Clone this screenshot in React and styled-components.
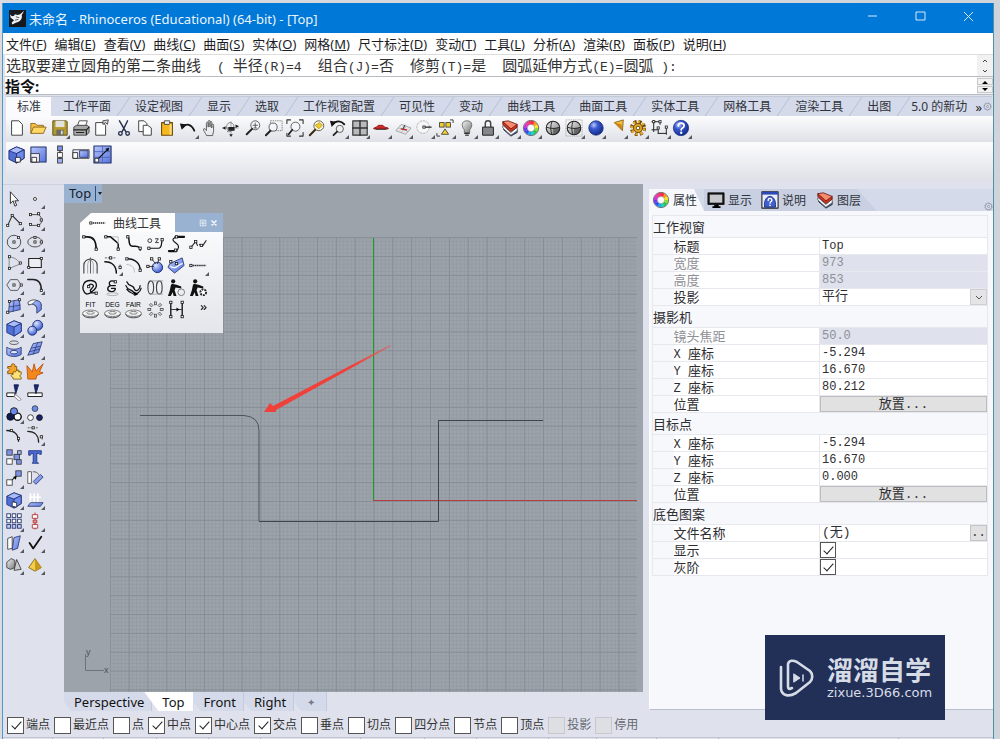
import React from "react";
import styled, { createGlobalStyle, css } from "styled-components";

const SANS = `"Noto Sans", "Noto Sans CJK SC", sans-serif`;
const MONO = `"Liberation Mono", "Noto Sans CJK SC", monospace`;
const TAB = "#d5daea";
const FRAME = "#dfe2ec";

const Global = createGlobalStyle`
  *, *::before, *::after { box-sizing: border-box; }
  body { margin: 0; font-family: ${SANS}; font-size: 13px; color: #1d1d1f; background: #d3d6db; }
  button, input, select { font: inherit; color: inherit; margin: 0; }
`;

/* ---------- icon drawings, all on a 20 x 20 grid ---------- */

const HUES = ["#ff2d2d", "#ff9a1f", "#ffe81f", "#8fe02a", "#22cc4a", "#1fd2c0", "#22a4f2", "#2b50ee", "#7a35ee", "#cc35e6", "#f236b0", "#f53370"];
const arcLen = (2 * Math.PI * 6) / 12;
const wheel = (
  <g fill="none" strokeWidth="4">
    {HUES.map((c, i) => (
      <circle key={c} cx="10" cy="10" r="6" stroke={c} strokeDasharray={`${arcLen + 0.3} 60`} transform={`rotate(${i * 30 - 90} 10 10)`} />
    ))}
    <circle cx="10" cy="10" r="8.500" stroke="#444" strokeWidth=".8" />
    <circle cx="10" cy="10" r="4" stroke="#666" strokeWidth=".5" fill="#fff" />
  </g>
);
const node = (x, y, k) => <rect key={k || `${x}-${y}`} x={x - 1.2} y={y - 1.2} width="2.4" height="2.4" fill="#fff" stroke="#222" strokeWidth=".9" />;
const sq = (x, y, s, f = "#fff") => <rect key={`${x}-${y}`} x={x} y={y} width={s} height={s} fill={f} stroke="#333" strokeWidth=".9" />;
const ln = (d, c = "#222", w = 1.2) => <path d={d} fill="none" stroke={c} strokeWidth={w} strokeLinecap="round" strokeLinejoin="round" />;
const fl = (d, f, c = "#333", w = 0.9) => <path d={d} fill={f} stroke={c} strokeWidth={w} strokeLinejoin="round" />;
const ripple = (
  <g fill="none" stroke="#777">
    <ellipse cx="10" cy="14" rx="8.400" ry="3.400" fill="#f4f4f6" />
    <ellipse cx="10" cy="13.500" rx="4" ry="1.400" />
    <path d="M1.600 15c2 5 14.800 5 16.800 0" stroke="#444" />
  </g>
);
const cap = (t) => <text x="10" y="7" textAnchor="middle" fontSize="7" fontFamily="Liberation Sans, sans-serif" fill="#000">{t}</text>;
const cube = (
  <g>
    {fl("M2 6l8-4 8 3v9l-8 5-8-4z", "#4f6fd6", "#1d2c74")}
    {fl("M2 6l8-4 8 3-8 4z", "#aabcf8", "#1d2c74")}
    {fl("M10 9l8-4v9l-8 5z", "#6d8bea", "#1d2c74")}
  </g>
);
const digger = (
  <g>
    <circle cx="6.500" cy="3.500" r="2.200" fill="#111" />
    <path d="M5 6l5 1 5 2v2l-6-1-1 3 2 6H7l-1-4-2 4H1l2-6 1-5z" fill="#111" />
  </g>
);
const shaded = (
  <g>
    <circle cx="10" cy="10" r="7.500" fill="url(#grey)" />
    <path d="M10 10h7.500a7.500 7.500 0 0 1-7.500 7.500z" fill="#333" opacity=".5" />
    <ellipse cx="10" cy="10" rx="7.500" ry="7.500" fill="none" stroke="#222" strokeWidth="1.200" />
    <path d="M9 2.500c-2 5-2 10 0 15M2.500 9c5 2 10 2 15 0" fill="none" stroke="#222" />
  </g>
);

const ICONS = {
  file: fl("M4 2h8l4 4v12H4z", "#fff", "#444", 1.1),
  open: <g>{fl("M2 16V5h5l2 2h7v3", "#f6c044", "#805a10")}{fl("M2 16l3-7h14l-3 7z", "#ffd766", "#805a10")}</g>,
  save: <g>{fl("M2 2h15l1 1v15H2z", "#b39a2c", "#4a4010")}<path d="M5 2h10v7H5z" fill="#e3e3dc" /><path d="M6 12h8v6H6z" fill="#6b6b6b" /><path d="M11 13h2v4h-2z" fill="#ddd" /></g>,
  print: <g>{fl("M6 8l2-6h9l-2 6z", "#fff")}{fl("M2 9l3-2h12l2 2v6l-3 3H2z", "#a8a8a8")}{ln("M2 12h14M5 15h8M16 12v5M16 12l3-3", "#222", 1.3)}</g>,
  props: <g>{fl("M3 4h8l3 3v11H3z", "#fff", "#444", 1.1)}{fl("M11 2l6-1-1 5-2-2-3 2z", "#d8d8d8")}</g>,
  cut: <g>{ln("M5 2l7 12M14 2L8 14", "#25304c", 1.6)}<g fill="none" stroke="#25304c" strokeWidth="1.5"><circle cx="6" cy="16" r="2" /><circle cx="14" cy="16" r="2" /></g></g>,
  copy: <g>{fl("M3 2h6l3 3v9H3z", "#fff", "#444", 1.1)}{fl("M8 7h5l4 3v8H8z", "#fff", "#444", 1.1)}</g>,
  paste: <g>{fl("M4 4h12v14H4z", "#f5b820", "#6b4a0a", 1.2)}{fl("M7 2h6v4H7z", "#eee")}<path d="M13 5l2 1v11l-2 1z" fill="#fbe08c" /></g>,
  undo: <g>{ln("M4 9c4-5 10-3 13 4", "#151515", 2)}<path d="M1 5l8 1-6 6z" fill="#151515" /></g>,
  hand: ln("M6 18c-1-3-4-5-3-7 1-1 2 0 3 2V5c0-2 2-2 2 0v4-6c0-2 2-2 2 0v6-5c0-2 2-2 2 0v6-3c0-2 2-2 2 0v6c0 2-1 3-1 5z", "#555", 1),
  orbit: <g>{ln("M3 10h15M10 3v14", "#999", 0.9)}{ln("M7 13c-4-4-1-9 2-9s5 3 4 6-4 5-7 4", "#777", 1)}<path d="M10 20l2-3H8zM0 10l4-2v4zM19 8l-4-2v4zM7 9h7v4H7z" fill="#222" /></g>,
  zoom: <g><circle cx="12.5" cy="7" r="5" fill="#f3f6fa" stroke="#555" />{ln("M9 11l-6 6", "#222", 2.2)}{ln("M12.500 4.500v5M10 7h5M11 10h3", "#444", 0.9)}</g>,
  zoomwin: <g><path d="M6 2h13v11H6z" fill="none" stroke="#777" strokeDasharray="1.500 1" /><circle cx="9" cy="9" r="4.500" fill="#f3f6fa" stroke="#555" />{ln("M6 13l-5 5", "#222", 2.200)}</g>,
  zoomext: <g><circle cx="10.500" cy="8.500" r="5" fill="#f3f6fa" stroke="#555" />{ln("M7 12l-4 5", "#222", 2)}{ln("M1 5V1h4M15 1h4v4M19 15v4h-4M5 19H1v-3", "#333")}</g>,
  zoomsel: <g><circle cx="12" cy="7.500" r="5.500" fill="#fff8d0" stroke="#555" /><path d="M8 7l5-3 3 3-4 4z" fill="#f6c91c" stroke="#775" strokeWidth=".6" />{ln("M8 12l-6 6", "#3a2a10", 2.200)}</g>,
  undoview: <g>{ln("M4 6c4-5 10-4 13 0", "#151515", 2)}<path d="M1 2l7 1-5 6z" fill="#151515" /><circle cx="12" cy="11" r="4" fill="#eee" stroke="#555" />{ln("M9 14l-4 4", "#222", 2)}</g>,
  four: <g>{fl("M2 2h16v16H2z", "#b8babd", "#333", 1.300)}{ln("M10 2v16M2 10h16", "#333", 1.600)}</g>,
  car: <g>{fl("M2 10l3-1 2-2h5l2 2 4 1v1H2z", "#cf2a2a", "#8a1414")}<path d="M4 11h12v1H4z" fill="#333" /></g>,
  cplane: <g>{fl("M2 13l6-7 11 4-6 7z", "#e5e5e8", "#999")}{ln("M5 10l11 4M8 15l6-7", "#aaa", 0.7)}{ln("M8 11l6 1", "#c22", 1.400)}{ln("M10 11l2-4", "#444", 1.200)}</g>,
  named: <g><circle cx="9" cy="9" r="7" fill="#f6f6f8" stroke="#aaa" strokeDasharray="3 1" />{ln("M9 9h9", "#222", 1.200)}{node(10, 9)}</g>,
  objprops: <g>{sq(4, 4, 5, "#f3cf2c")}{sq(11, 4, 5, "#f3cf2c")}{fl("M10 11l4 6H6z", "#f3cf2c")}{ln("M16 1h3v3M1 16v3h3", "#333", 1)}</g>,
  bulb: <g><path d="M10 2c-7 0-6 7-3 10v3h6v-3c3-3 4-10-3-10z" fill="url(#grey)" stroke="#555" strokeWidth=".8" />{ln("M7.500 16h5M8.500 18h3", "#333", 1.400)}</g>,
  lock: <g>{ln("M7 10V5c0-4 6-4 6 0v5", "#444", 1.600)}{fl("M4 9h12v9H4z", "#85878b", "#222", 1.100)}</g>,
  layers: <g>{fl("M3 9l8 9 7-6v3l-7 4-8-7z", "#3c5ecb", "#222")}{fl("M2 7l9 8 7-6v4l-7 5-9-8z", "#fff", "#555")}{fl("M2 3l9 7 7-4v3l-7 5-9-8z", "#d8361f", "#611")}{fl("M2 3l6-1 10 4-7 5z", "#f58b6c", "#611")}</g>,
  wheel,
  shade: shaded,
  shade2: <g><path d="M1 1h18v18H1z" fill="none" stroke="#999" strokeDasharray="1 1" />{shaded}</g>,
  ball: <circle cx="10" cy="10" r="8" fill="url(#blueball)" stroke="#10246a" strokeWidth=".8" />,
  spot: <g>{fl("M7 4l10-3-1 12z", "#f5c03c", "#7a5310")}<path d="M7 4l8 2 1 7z" fill="#c98814" /></g>,
  gear: <g><circle cx="10" cy="10" r="6.500" fill="none" stroke="#6a450c" strokeWidth="5" strokeDasharray="2.900 2.200" /><circle cx="10" cy="10" r="6.800" fill="none" stroke="#e0a92b" strokeWidth="3.200" strokeDasharray="2.500 2.600" strokeDashoffset="-.2" /><circle cx="10" cy="10" r="5" fill="#e0a92b" stroke="#6a450c" /><circle cx="10" cy="10" r="2" fill="#fff" stroke="#6a450c" /></g>,
  dim: <g>{ln("M3 2v12M1 3h9M1 12h6M10 3v3M8 9v7M8 16h9M17 9v8", "#222", 1.100)}{[[3, 3], [10, 3], [8, 10], [17, 9]].map(([x, y]) => node(x, y))}</g>,
  help: <g><circle cx="10" cy="10" r="8.500" fill="url(#blueball)" stroke="#1b2c86" strokeWidth=".8" />{ln("M7 7.500c0-4 6.500-3.500 6.500 0 0 2.500-3.300 2.300-3.300 4.500", "#fff", 2)}<circle cx="10.200" cy="15.300" r="1.300" fill="#fff" /></g>,

  boxview: <g>{cube}{fl("M9 13h5v5H9z", "#fff", "#222")}</g>,
  sqview: <g>{fl("M2 2h16v16H2z", "url(#blue)", "#26346e", 1.100)}{fl("M2 9h9v9H2z", "#eef", "#333")}{fl("M3 13h5v5H3z", "#fff", "#222")}</g>,
  stackview: <g>{sq(8, 1, 5, "#7d93e8")}{sq(8, 8, 5)}{sq(8, 14, 5, "#9fb0f3")}{ln("M10.500 6v2M10.500 13v1")}</g>,
  wideview: <g>{fl("M2 5h17v9H2z", "#e9ecfa", "#333")}{fl("M9 6h9v7H9z", "url(#blue)", "#26346e")}{fl("M2 8h5v6H2z", "#fff", "#222")}</g>,
  gridview: <g>{fl("M1 1h18v18H1z", "url(#blue)", "#26346e", 1.200)}{ln("M1 13h18M10 1v18M1 7h18", "#5468b8", 1)}{ln("M4 16L16 4", "#111", 1.200)}<path d="M17 3l-1 4-3-3z" fill="#111" />{fl("M2 14h4v4H2z", "#fff", "#222")}</g>,

  arrow: fl("M6 2v13l3-3 2 6 2-1-2-5h4z", "#fff", "#222", 1),
  point: <circle cx="10" cy="10" r="1.700" fill="#fff" stroke="#333" />,
  poly: <g>{ln("M3 16L8 5l9 9", "#333")}{node(3, 16)}{node(8, 5)}{node(17, 14)}</g>,
  loop: <g><path d="M5 4h9c5 4 4 10 0 12H5" fill="none" stroke="#444" />{node(5, 4)}{node(14, 3)}{node(17, 10)}{node(14, 16)}{node(5, 15)}</g>,
  circle: <g><circle cx="10" cy="10" r="7.500" fill="none" stroke="#444" />{node(10, 10)}{node(15, 5)}</g>,
  ellipse: <g><ellipse cx="10" cy="10" rx="8" ry="5.500" fill="none" stroke="#444" />{node(10, 10)}{node(10, 5)}{node(17, 10)}</g>,
  arc: <g>{ln("M5 3c6 1 10 4 12 8L5 16z", "#777", 0.900)}{node(5, 3)}{node(5, 16)}{node(17, 10)}</g>,
  rect: <g>{fl("M3 5h14v10H3z", "#eceef4", "#222", 1.200)}{node(3, 15)}{node(17, 5)}</g>,
  polygon: <g>{fl("M6 4h8l4 6-4 6H6l-4-6z", "none", "#444")}{node(10, 10)}{node(18, 10)}</g>,
  fillet: <g>{ln("M2 4h6c6 0 9 4 9 12", "#222", 1.700)}{node(17, 16)}</g>,
  surf: <g>{fl("M5 5l11-2 1 11-13 3z", "url(#blue)", "#26346e")}{ln("M10 4l-1 12M5 11l12-2", "#26346e", 0.800)}{node(5, 5)}{node(16, 3)}{node(3, 17)}</g>,
  bend: <g>{fl("M2 6c6-5 12-3 15 3l-5 3c-2-4-5-5-9-3z", "#f7f8fc")}{fl("M12 12c-1-3-3-4-5-4l4-4c4 0 6 2 6 5v5l-5 4z", "url(#blue)", "#26346e")}</g>,
  cube,
  balls: <g><circle cx="13" cy="7" r="5.500" fill="url(#blueball2)" stroke="#1d2c74" /><circle cx="7" cy="13" r="5" fill="url(#blueball2)" stroke="#1d2c74" /></g>,
  project: <g><ellipse cx="10" cy="3" rx="5" ry="2" fill="none" stroke="#555" />{fl("M2 8c4 3 12 3 16 0v8c-4 3-12 3-16 0z", "url(#blue)", "#26346e")}<ellipse cx="10" cy="13.500" rx="4" ry="2" fill="#dfe6ff" stroke="#26346e" /></g>,
  mesh: <g>{fl("M8 4l10-2-4 12-12 3z", "url(#blue)", "#26346e")}{ln("M13 3L8 16M6 9l10-2M4 13l11-3", "#26346e", 0.800)}</g>,
  puzzle: <g>{fl("M3 5h4c-1-4 5-4 4 0h2v4c4-1 4 4 0 4H3v-3c3 0 3-3 0-3z", "#f2a52a", "#7a4a08")}{fl("M9 11h3c0-3 4-2 3 0h3v3c-2 0-2 3 0 3v2H9v-2c-3 0-3-4 0-3z", "#ffe27a", "#7a5a08")}</g>,
  burst: fl("M1 4l6 7 2-9 2 8 8-8-4 9 4 1-7 3-1 4H2z", "#f5881d", "#b74a08"),
  trim: <g>{fl("M2 11h9v4H2z", "#fff", "#222", 1.100)}{fl("M12 13l6 5-2 2-6-5z", "#fff", "#777")}{fl("M10 2h5l-3 10z", "#1a2a78", "#0d1644")}</g>,
  split: <g>{fl("M2 11h16v4H2z", "#fff", "#222", 1.100)}{fl("M9 2h5l-3 10z", "#1a2a78", "#0d1644")}</g>,
  join: <g><circle cx="6" cy="13" r="4" fill="#101a52" stroke="#111" /><circle cx="14" cy="13" r="4" fill="#fff" stroke="#111" strokeWidth="1.600" /><circle cx="10" cy="7" r="4" fill="#6d88e6" stroke="#111" /></g>,
  unjoin: <g><circle cx="10" cy="4" r="3.200" fill="#6d88e6" stroke="#345" /><circle cx="5" cy="14" r="3.200" fill="#fff" stroke="#333" /><circle cx="15" cy="14" r="3.200" fill="#15236b" stroke="#111" /></g>,
  curve: <g>{ln("M2 5c9 0 13 5 13 12", "#222", 1.400)}{node(7, 5)}{node(15, 14)}</g>,
  curve2: <g>{ln("M2 6c8 0 12 5 12 12", "#222", 1.400)}<path d="M2 2h11M18 10v6" stroke="#555" strokeDasharray="2 1" />{node(8, 2)}{node(17, 12)}</g>,
  group: <g>{sq(2, 2, 6, "#7d93e8")}{sq(10, 7, 6, "#7d93e8")}{sq(2, 12, 6)}{sq(13, 13, 5, "#7d93e8")}{sq(14, 3, 4, "#9fb0f3")}</g>,
  text: fl("M3 3h14v4h-2l-1-1h-2v9l2 2H7l1-2V6H6L5 8H3z", "#4a6ad6", "#1d2c74"),
  move: <g>{sq(12, 2, 6, "#7d93e8")}{sq(2, 12, 6)}{ln("M8 12l4-4")}<path d="M13 8l-1 4-3-3z" /></g>,
  rotate: <g>{fl("M2 3h4v13H2z", "#fff", "#444")}{fl("M8 14l8-8 3 3-8 8z", "url(#blue)", "#26346e")}{ln("M8 3c3 0 5 1 6 3", "#555", 1)}</g>,
  cubebox: <g>{cube}{fl("M8 12l5 1v5l-5-1z", "#fff", "#222")}</g>,
  rays: <g>{ln("M5 3v9M9 3v9M13 3v9M4 7h12", "#fff", 1.800)}{fl("M5 13h14l-3 4H2z", "url(#blue)", "#26346e")}</g>,
  array: <g>{[2, 8, 14].map((x) => [2, 8, 14].map((y) => <rect key={`${x}-${y}`} x={x} y={y} width="4" height="4" fill={y > 9 ? "#c3cdf8" : "#fff"} stroke="#26346e" />))}</g>,
  align: <g>{ln("M10 1v18", "#c22", 1)}{fl("M7 3h6v4H7z", "#fff", "#a22")}{fl("M8 9h4v3H8z", "#f0a0a0", "#a22")}{fl("M7 14h6v4H7z", "#fff", "#a22")}</g>,
  book: <g>{fl("M3 5l5-2v13l-5 1z", "#fff")}{fl("M10 4l7-2-3 14-6 2z", "url(#blue)", "#26346e")}</g>,
  check: ln("M4 10l4 6 9-13", "#111", 2),
  solids: <g>{fl("M2 8l5-4 4 2v8l-5 2-4-2z", "url(#grey)")}{fl("M13 5l5 11-8 1z", "#c9cbd0")}</g>,
  pyramid: <g>{fl("M10 4l7 10-7 4-7-4z", "#f3ce4c", "#7a5a08")}<path d="M10 4l7 10-7 4z" fill="#c79a1c" /></g>,

  c1: <g>{ln("M2 3h5c6 0 9 4 9 13", "#111", 1.700)}{node(3, 3)}{node(16, 16)}</g>,
  c2: <g>{ln("M2 3h6l8 7v6", "#111", 1.600)}{ln("M10 3h6v7", "#bbb", 1)}{node(3, 3)}{node(16, 16)}</g>,
  c3: <g>{ln("M4 2c3 3-1 10 5 11 4 0 7-1 8 4", "#111", 1.600)}{node(4, 3)}{node(17, 15)}</g>,
  c4: <g>{ln("M3 15h10c4 0 3-5 4-9", "#111", 1.300)}{node(3, 15)}{node(17, 6)}<circle cx="4" cy="7" r="2" fill="none" stroke="#333" />{ln("M10 5h3l-3 4h3", "#333", 1)}</g>,
  c5: <g>{ln("M9 3h9M2 18h8", "#111", 2.200)}{ln("M11 3c-8 2-4 5-1 7s3 6-1 8", "#111", 1.200)}{node(10, 3)}{node(9, 17)}</g>,
  c6: <g>{ln("M2 14l5-6 2 4", "#333")}{ln("M11 11l3 2 4-6", "#333")}{node(7, 8)}{node(2, 14)}{node(13, 12)}</g>,
  c7: <g>{ln("M3 18V10c0-9 14-9 14 0v8", "#444", 1.200)}{ln("M10 2v16", "#555", 1)}{ln("M7 18v-8c0-3 1-5 3-6 2 1 3 3 3 6v8", "#999", 0.900)}</g>,
  c8: <g>{ln("M2 6c8 0 12 5 12 12", "#111", 1.600)}<path d="M2 2h11M18 9v6" stroke="#555" strokeDasharray="2 1" />{node(8, 2)}{node(18, 12)}</g>,
  c9: <g>{ln("M3 3c9 0 14 5 14 12", "#111", 1.600)}{ln("M3 9c5 0 8 3 8 8", "#bbb", 1)}{node(3, 3)}{node(17, 15)}</g>,
  c10: <g><circle cx="12" cy="12" r="5.500" fill="url(#blueball2)" stroke="#1d2c74" />{ln("M1 11h7M6 3l4 5M14 3l-2 5", "#222", 0.900)}{node(2, 11)}{node(6, 3)}{node(14, 3)}</g>,
  c11: <g>{fl("M3 8l13-6 2 8-10 8-7-6z", "url(#blue)", "#26346e")}{ln("M4 11c5 4 8-2 12-3", "#fff", 1.300)}{node(4, 6)}{node(10, 8)}</g>,
  c12: <g><path d="M2 10h16" stroke="#222" strokeWidth="1.500" strokeDasharray="1.500 .7" />{node(2, 10)}</g>,
  c13: <g>{ln("M6 17c-4-2-5-7-3-11s11-5 13 0c1 4-1 6-4 8M12 14c-2 2-4 3-6 3M8 8c1-2 4-2 5 0s-4 3-3 6 4 1 6 2", "#111", 1.400)}{node(8, 9)}{node(16, 16)}</g>,
  c14: <g>{ln("M13 4c-6-3-8 2-5 4-4 1-4 6 0 6 3 1 5-1 5-3M9 8h4M9 11h4", "#111", 1.400)}<ellipse cx="10" cy="17" rx="6" ry="1.500" fill="none" stroke="#aaa" />{node(13, 4)}</g>,
  c15: <g>{ln("M3 4c2 6 7 2 8 8 2 3 6 0 6-4M2 8c2 6 6 3 8 7 3 3 7 0 8-4M3 12c3 4 5 3 7 5", "#111", 1.300)}<path d="M10 14l5 3-4 2z" /></g>,
  c16: <g><ellipse cx="5" cy="10" rx="3" ry="7" fill="none" stroke="#444" strokeWidth="1.200" /><ellipse cx="14" cy="10" rx="3" ry="7" fill="none" stroke="#444" strokeWidth="1.200" /><path d="M5 3h13M5 17h13" fill="none" stroke="#aaa" /></g>,
  c17: <g>{digger}<circle cx="15" cy="15" r="3.500" fill="#eee" stroke="#777" /></g>,
  c18: <g>{digger}<circle cx="15" cy="15" r="3" fill="#fff" stroke="#222" strokeWidth="2" strokeDasharray="2 1" /></g>,
  fit: <g>{ripple}{cap("FIT")}</g>,
  deg: <g>{ripple}{cap("DEG")}</g>,
  fair: <g>{ripple}{cap("FAIR")}</g>,
  ring: <g>{Array.from({ length: 8 }, (_, i) => <rect key={i} x="8.900" y="2" width="2.200" height="3" fill="#ddd" stroke="#444" strokeWidth=".8" transform={`rotate(${i * 45} 10 10)`} />)}</g>,
  measure: <g>{ln("M4 2v16M16 2v16", "#111", 1.400)}{ln("M4 10h12", "#333", 1)}<path d="M10 8l3 2-3 2z" />{[2.500, 17.500].map((y) => [4, 16].map((x) => node(x, y)))}</g>,
  more: ln("M13 6l2 2-2 2M16 6l2 2-2 2", "#222", 1.200),

  monitor: <g>{fl("M1 2h18v13H1z", "#111", "#111")}<path d="M3 4h14v9H3z" fill="#c5c7ca" /><path d="M8 15h5v2h2v2H6v-2h2z" /></g>,
  helpwin: <g>{fl("M1 1h18v18H1z", "#e8edff", "#222", 1.200)}<path d="M1 1h18v3H1z" fill="#2d49b5" /><path d="M4 18c-2-16 14-16 12 0z" fill="#3f60d0" stroke="#1d2c74" />{ln("M8 10.500c0-3 4-3 4 0 0 1.500-2 1.500-2 3", "#fff", 1.500)}<circle cx="10" cy="16" r=".9" fill="#fff" /></g>,
  gearSmall: <g fill="none" stroke="#8a8f99"><circle cx="10" cy="10" r="7.500" strokeWidth="2.500" strokeDasharray="3 1" /><circle cx="10" cy="10" r="2.500" strokeWidth="1.500" /></g>,
  gearWhite: <g fill="none" stroke="#f0f4fa"><path d="M3 3h14v14H3z" strokeWidth="2.500" strokeDasharray="4 1" /><circle cx="10" cy="10" r="3" strokeWidth="2.500" /></g>,
  closeWhite: ln("M6 6l8 8M14 6l-8 8", "#f0f4fa", 3.500),
  rhino: <g><path d="M0 0h20v20H0z" fill="#16181d" /><path d="M1 5c2 3 5 3 6 0l3 1 3-1 5-4-3 5c1 5-2 8-7 9l-4 2-1-2 3-3-4-3z" fill="#eef1f5" /><path d="M8 8l4 1M7 12l4-1" stroke="#444" /></g>,
};

const Glyph = styled.svg`
  display: block;
  flex: none;
  width: ${(p) => p.$size}px;
  height: ${(p) => p.$size}px;
`;
const Icon = ({ name, size = 18 }) => (
  <Glyph viewBox="0 0 20 20" $size={size} aria-hidden="true">{ICONS[name]}</Glyph>
);
const Defs = styled.svg`
  position: absolute;
  width: 0;
  height: 0;
`;
const SharedDefs = () => (
  <Defs aria-hidden="true">
    <defs>
      <linearGradient id="blue" x1="0" y1="0" x2="1" y2="1"><stop offset="0" stopColor="#b7c6fb" /><stop offset="1" stopColor="#5673dc" /></linearGradient>
      <linearGradient id="grey" x1="0" y1="0" x2="1" y2="1"><stop offset="0" stopColor="#f4f4f4" /><stop offset="1" stopColor="#777" /></linearGradient>
      <radialGradient id="blueball" cx=".35" cy=".3" r=".7"><stop offset="0" stopColor="#b8c8ff" /><stop offset=".4" stopColor="#3a59cc" /><stop offset="1" stopColor="#142f92" /></radialGradient>
      <radialGradient id="blueball2" cx=".35" cy=".3" r=".7"><stop offset="0" stopColor="#dce6ff" /><stop offset="1" stopColor="#3f60d0" /></radialGradient>
    </defs>
  </Defs>
);

/* ---------- window frame ---------- */

const Desktop = styled.div`
  height: 100vh;
  overflow: hidden;
  padding: 3px 6px 0 2px;
  background: linear-gradient(90deg, #d8dbe0, #cfd4da);
`;
const Window = styled.div`
  height: 100%;
  display: flex;
  flex-direction: column;
  overflow: hidden;
  background: ${FRAME};
  border-left: 1px solid #4f9ac9;
  border-right: 1px solid #4f8fa8;
`;
const TitleBar = styled.header`
  flex: none;
  display: flex;
  align-items: center;
  height: 30px;
  padding-left: 6px;
  background: #0078d7;
  color: #eaf4fd;
  h1 { margin: 0; padding-left: 3px; flex: 1; font-size: 13px; font-weight: 400; }
`;
const WindowButton = styled.button`
  width: 48px;
  height: 30px;
  border: 0;
  padding: 0 16px;
  background: none;
`;
const MenuBar = styled.nav`
  flex: none;
  display: flex;
  gap: 8px;
  height: 21px;
  padding-left: 3px;
  background: #fff;
`;
const MenuButton = styled.button`
  border: 0;
  padding: 0;
  background: none;
  font-size: 13px;
  line-height: 20px;
  white-space: nowrap;
`;

const CommandArea = styled.section`
  flex: none;
  margin-left: 2px;
  border-top: 1px solid #dcdcdc;
  background: #fff;
`;
const CommandLine = styled.div`
  display: flex;
  align-items: center;
  height: ${(p) => p.$height}px;
  border-bottom: 1px solid #b9bcc0;
`;
const History = styled.div`
  flex: 1;
  display: flex;
  gap: 16px;
  padding: 2px 0 0 1px;
  line-height: 20px;
  white-space: pre;
  color: #333;
`;
const Option = styled.span`
  flex: none;
`;
const Cjk = styled.span`
  font-family: ${MONO};
  font-size: ${(p) => p.$size}px;
`;
const Latin = styled.span`
  font-size: ${(p) => p.$size}px;
`;
const CommandLabel = styled.label`
  font-size: 15px;
  line-height: 18px;
  font-weight: 700;
  color: #111;
`;
const CommandInput = styled.input`
  flex: 1;
  border: 0;
  outline: 0;
  height: 16px;
  background: none;
`;
const Spinner = styled.div`
  display: flex;
  flex-direction: column;
  width: 16px;
  height: 100%;
  padding: 1px 0;
  gap: 1px;
  background: #f1f1f2;
`;
const SpinButton = styled.button`
  flex: 1;
  display: grid;
  place-items: center;
  padding: 0;
  border: ${(p) => (p.$framed ? "1px solid #c9c9cb" : "0")};
  background: #f1f1f2;
`;

const TabStrip = styled.div`
  flex: none;
  display: flex;
  align-items: stretch;
  height: 20px;
  margin: 1px 1px 0 3px;
  overflow: hidden;
  background: ${TAB};
  border-top: 1px solid #c4c9d6;
`;
const TAB_PADDING = { first: "0 10px 0 11px", middle: "0 12px", last: "0 0 0 8px" };
const ToolTab = styled.button`
  position: relative;
  flex: none;
  border: 0;
  padding: ${(p) => TAB_PADDING[p.$place]};
  background: ${(p) => (p.$place === "first" ? "#fbfbfd" : "none")};
  font-size: 12px;
  line-height: 18px;
  color: #30333b;
  white-space: nowrap;
  ${(p) => p.$place === "middle" && css`
    &::after {
      content: "";
      position: absolute;
      right: -1px;
      top: 0;
      bottom: 0;
      width: 12px;
      border-right: 1px solid #b7bfd4;
      transform: skewX(-34deg);
    }
  `}
`;
const StripEnd = styled.div`
  flex: none;
  margin-left: auto;
  display: flex;
  align-items: center;
  gap: 1px;
  background: ${TAB};
  font-size: 13px;
`;
const ToolRow = styled.div`
  flex: none;
  display: flex;
  align-items: center;
  height: ${(p) => p.$height}px;
  margin-left: 3px;
  padding-bottom: ${(p) => p.$below || 0}px;
  background: linear-gradient(#fcfcfd, #dfe1e8);
`;
const ToolSet = styled.div`
  display: grid;
  grid-template-columns: repeat(${(p) => p.$count}, 1fr);
  width: ${(p) => p.$width}px;
`;
const Tool = styled.button`
  position: relative;
  display: grid;
  place-items: center;
  height: ${(p) => p.$height || 21}px;
  padding: 0;
  border: 0;
  background: none;
  ${(p) => p.$flyout && css`
    &::after {
      content: "";
      position: absolute;
      right: 0;
      bottom: 0;
      border: 2px solid transparent;
      border-right-color: #55585f;
      border-bottom-color: #55585f;
    }
  `}
`;

/* ---------- work area ---------- */

const Work = styled.main`
  flex: 1;
  min-height: 0;
  display: flex;
  padding-top: 4px;
`;
const Palette = styled.aside`
  flex: none;
  align-self: flex-start;
  display: grid;
  grid-template-columns: 21px 21px;
  grid-auto-rows: 1fr;
  width: 61px;
  height: 391px;
  padding-top: 3px;
  border-top: 1px solid #cdd1dc;
`;
const ViewColumn = styled.section`
  flex: 1;
  min-width: 0;
  display: flex;
  flex-direction: column;
`;
const Viewport = styled.div`
  position: relative;
  flex: 1;
  min-height: 0;
  overflow: hidden;
  background: #9da3aa;
`;
const Scene = styled.svg`
  position: absolute;
  inset: 0;
  width: 100%;
  height: 100%;
`;
const ViewTitle = styled.button`
  position: relative;
  display: flex;
  align-items: center;
  gap: 2px;
  height: 19px;
  padding: 0 0 0 5px;
  border: 0;
  background: #9ab2d2;
  font-size: 13px;
  color: #15202f;
  &::after {
    content: "";
    border: 2px solid transparent;
    border-top: 3px solid #15202f;
    border-bottom: 0;
  }
  span { padding-right: 4px; border-right: 1px solid #33507a; line-height: 15px; }
`;
const Floating = styled.section`
  position: absolute;
  left: 16px;
  top: 29px;
  width: 143px;
  height: 120px;
  background: linear-gradient(#fdfdfe, #e4e6eb);
`;
const FloatTitle = styled.header`
  display: flex;
  align-items: center;
  height: 19px;
  background: linear-gradient(90deg, #9da3aa 0 20px, #9ab2d2 20px);
`;
const FloatTab = styled.h2`
  display: flex;
  align-items: center;
  gap: 6px;
  width: 95px;
  height: 19px;
  margin: 0 auto 0 0;
  padding-left: 9px;
  background: #fdfdfe;
  clip-path: polygon(11px 0, 100% 0, 100% 100%, 0 100%, 0 10px);
  font-size: 12px;
  font-weight: 400;
  color: #333;
`;
const FloatButton = styled.button`
  display: grid;
  place-items: center;
  width: 11px;
  height: 11px;
  margin-right: 3px;
  padding: 0;
  border: 0;
  background: none;
  & + & { margin-right: 4px; margin-left: -3px; }
`;
const FloatGrid = styled.div`
  display: grid;
  grid-template-columns: repeat(6, 1fr);
  width: 129px;
`;
const ViewTabs = styled.div`
  flex: none;
  display: flex;
  height: 20px;
`;
const ViewTab = styled.button`
  height: 19px;
  margin-left: ${(p) => (p.$active ? "-8px" : "0")};
  padding: 0 ${(p) => (p.$active ? 8 : 7)}px 0 ${(p) => (p.$active ? 18 : 10)}px;
  border: 0;
  border-right: 1px solid #c3cade;
  background: ${(p) => (p.$active ? "#fff" : TAB)};
  clip-path: polygon(0 0, 100% 0, 100% 100%, ${(p) => (p.$active ? "14px 100%, 0 0" : "7px 100%, 0 10px")});
  font-size: 13px;
  line-height: 18px;
  color: #111;
  &:last-child { padding: 0 11px 0 13px; font-size: 10px; color: #777c88; }
`;

/* ---------- property panel ---------- */

const Panel = styled.aside`
  flex: none;
  display: flex;
  flex-direction: column;
  width: 350px;
  margin-top: 5px;
  padding-left: 6px;
`;
const PanelTabs = styled.div`
  display: flex;
  height: 22px;
  background: ${TAB};
`;
const PanelTab = styled.button`
  display: flex;
  align-items: center;
  gap: 3px;
  height: 22px;
  padding: 0 0 0 3px;
  width: ${(p) => p.$width}px;
  border: 0;
  background: ${(p) => (p.$active ? "#f7f8fb" : "#c9d0e1")};
  ${(p) => p.$slant && css`clip-path: polygon(0 0, calc(100% - ${p.$slant}px) 0, 100% 100%, 0 100%);`}
  font-size: 12px;
  color: #2f333c;
`;
const PanelGear = styled.span`
  margin: auto 0 0 auto;
`;
const PanelBody = styled.div`
  flex: 1;
  margin-bottom: 2px;
  padding: 4px 5px 0 2px;
  background: #f7f8fb;
  border-left: 1px solid #fff;
  border-bottom: 1px solid #b9bfcc;
`;
const Props = styled.table`
  width: 100%;
  table-layout: fixed;
  border-collapse: collapse;
  font-size: 13px;
  line-height: 16px;
  color: #2f2f33;
  td, th { padding: 0; font-weight: 400; text-align: left; border: 1px solid #e6e8ed; }
`;
const GutterCol = styled.col`
  width: 21px;
`;
const LabelCol = styled.col`
  width: 146px;
`;
const Group = styled.th`
  height: 22px;
  background: #f7f8fb;
`;
const Row = styled.tr`
  height: 17px;
  color: ${(p) => (p.$dim ? "#8e9096" : "inherit")};
  background: #fff;
  th { border-left: 0; }
  td:first-child { border-right: 0; background: #f7f8fb; }
  td:last-child { background: ${(p) => (p.$dim ? FRAME : "#fff")}; }
`;
const RowLabel = styled.label`
  display: block;
  height: 16px;
  overflow: hidden;
`;
const Value = styled.input`
  display: block;
  width: 100%;
  height: 16px;
  padding: 0 0 0 2px;
  border: 0;
  outline: 0;
  background: none;
  font: ${(p) => p.$size || 12}px/16px ${MONO};
`;
const Split = styled.div`
  display: flex;
`;
const Choice = styled.select`
  display: block;
  width: 100%;
  height: 16px;
  padding: 0 0 0 2px;
  border: 0;
  appearance: none;
  background: #fff;
  font: 13px/16px ${MONO};
`;
const SideBox = styled.span`
  flex: none;
  display: grid;
  place-items: center;
  width: 17px;
  height: 16px;
  border: 1px solid #cfcfd2;
  background: #e4e4e6;
`;
const DotsButton = styled.button`
  flex: none;
  width: 17px;
  height: 16px;
  padding: 0;
  overflow: hidden;
  border: 1px solid #c4c4c8;
  background: #e1e1e1;
  font: 12px/12px ${MONO};
`;
const PlaceButton = styled.button`
  display: block;
  width: 100%;
  height: 16px;
  padding: 0;
  border: 1px solid #bdbdc0;
  background: #e1e1e1;
  font: 13px/13px ${MONO};
`;
const Check = styled.input`
  appearance: none;
  position: relative;
  display: block;
  flex: none;
  width: ${(p) => p.$size}px;
  height: ${(p) => p.$size}px;
  border: 1px solid ${(p) => (p.disabled ? "#c6c8ce" : "#555")};
  background: ${(p) => (p.disabled ? "#dedfe3" : "#fff")};
  &:checked::after {
    content: "";
    position: absolute;
    left: calc(50% - 2px);
    top: calc(50% - 6px);
    width: 5px;
    height: 10px;
    border: solid #222;
    border-width: 0 1px 1px 0;
    transform: rotate(42deg);
  }
`;

/* ---------- bottom bars ---------- */

const SnapBar = styled.div`
  flex: none;
  display: flex;
  align-items: center;
  gap: 4px;
  height: 25px;
  padding: 1px 0 0 4px;
`;
const Snap = styled.label`
  display: flex;
  align-items: center;
  gap: 2px;
  font-size: 12px;
  line-height: 16px;
  color: ${(p) => (p.$dim ? "#666a72" : "#333")};
  white-space: nowrap;
`;
const StatusBar = styled.footer`
  flex: none;
  display: flex;
  height: 2px;
  overflow: hidden;
  border-top: 1px solid #bfc4d0;
`;
const StatusCell = styled.span`
  flex: none;
  width: ${(p) => p.$width}px;
  border-right: 1px solid #aab0bd;
`;
const Brand = styled.aside`
  position: absolute;
  right: 55px;
  bottom: 19px;
  display: flex;
  align-items: center;
  gap: 12px;
  width: 180px;
  height: 85px;
  padding-left: 14px;
  background: #222f57;
  color: #d6dce6;
  strong { display: block; font: 700 26px/30px "Liberation Sans", "Noto Sans CJK SC", sans-serif; }
  small { display: block; font: 13px/14px "DejaVu Sans", sans-serif; }
`;

/* ---------- data ---------- */

const MENUS = [["文件", "F"], ["编辑", "E"], ["查看", "V"], ["曲线", "C"], ["曲面", "S"], ["实体", "O"], ["网格", "M"], ["尺寸标注", "D"], ["变动", "T"], ["工具", "L"], ["分析", "A"], ["渲染", "R"], ["面板", "P"], ["说明", "H"]];
const PROMPT = ["选取要建立圆角的第二条曲线", "( 半径(R)=4", "组合(J)=否", "修剪(T)=是", "圆弧延伸方式(E)=圆弧 ):"];
const TABS = ["标准", "工作平面", "设定视图", "显示", "选取", "工作视窗配置", "可见性", "变动", "曲线工具", "曲面工具", "实体工具", "网格工具", "渲染工具", "出图", "5.0 的新功"];
const tabPlace = (i) => (i === 0 ? "first" : i === TABS.length - 1 ? "last" : "middle");
const MAIN_TOOLS = "file open save+ print props cut copy paste undo+ hand orbit zoom zoomwin zoomext zoomsel undoview+ four+ car+ cplane+ named+ objprops+ bulb+ lock+ layers+ wheel+ shade shade2+ ball+ spot+ gear+ dim+ help+".split(" ");
const VIEW_TOOLS = "boxview sqview stackview wideview gridview".split(" ");
const PALETTE = "arrow point+ poly+ loop+ circle+ ellipse+ arc+ rect+ polygon+ fillet+ surf+ bend+ cube+ balls+ project+ mesh+ puzzle burst trim split join+ unjoin curve curve2+ group text move+ rotate cubebox+ rays+ array+ align+ book+ check+ solids+ pyramid+".split(" ");
const CURVES = "c1 c2 c3 c4 c5 c6 c7 c8+ c9 c10 c11 c12+ c13 c14 c15 c16 c17 c18 fit deg fair ring measure more".split(" ");
const SNAPS = [["端点", 1], ["最近点"], ["点"], ["中点", 1], ["中心点", 1], ["交点", 1], ["垂点"], ["切点"], ["四分点"], ["节点"], ["顶点"], ["投影", 0, 1], ["停用", 0, 1]];
const GROUPS = [
  { title: "工作视窗", rows: [["标题", "Top"], ["宽度", "973", "dim"], ["高度", "853", "dim"], ["投影", "平行", "select"]] },
  { title: "摄影机", rows: [["镜头焦距", "50.0", "dim"], ["X 座标", "-5.294"], ["Y 座标", "16.670"], ["Z 座标", "80.212"], ["位置", "放置...", "button"]] },
  { title: "目标点", rows: [["X 座标", "-5.294"], ["Y 座标", "16.670"], ["Z 座标", "0.000"], ["位置", "放置...", "button"]] },
  { title: "底色图案", rows: [["文件名称", "(无)", "file"], ["显示", "", "check"], ["灰阶", "", "check"]] },
];
const STATUS_WIDTHS = [50, 51, 53, 52, 52, 100, 64, 52, 72, 48, 60, 62, 180];

const Tools = ({ list, height, size }) =>
  list.map((entry) => {
    const name = entry.replace("+", "");
    return (
      <Tool key={name} aria-label={name} $flyout={entry.endsWith("+")} $height={height}>
        <Icon name={name} size={size} />
      </Tool>
    );
  });

/* Half-width characters are set a step smaller than the Chinese glyphs. */
const Mixed = ({ children, cjk, latin }) => (
  <Cjk $size={cjk}>
    {children.split(/([\x20-\x7e]+)/).map((t, i) => (i % 2 ? <Latin key={i} $size={latin}>{t}</Latin> : t))}
  </Cjk>
);

const Field = ({ kind, value, id }) => {
  if (kind === "button") return <PlaceButton id={id}>{value}</PlaceButton>;
  if (kind === "check") return <Check id={id} type="checkbox" $size={16} defaultChecked />;
  if (kind === "select")
    return (
      <Split>
        <Choice id={id} defaultValue={value}><option>{value}</option></Choice>
        <SideBox><svg width="8" height="5" viewBox="0 0 8 5"><path d="M1 1l3 3 3-3" fill="none" stroke="#555" /></svg></SideBox>
      </Split>
    );
  if (kind === "file")
    return (
      <Split>
        <Value id={id} $size={13} defaultValue={value} />
        <DotsButton aria-label="浏览">..</DotsButton>
      </Split>
    );
  return <Value id={id} defaultValue={value} disabled={kind === "dim"} />;
};

export default function App() {
  return (
    <Desktop>
      <Global />
      <SharedDefs />
      <Window>
        <TitleBar>
          <Icon name="rhino" size={17} />
          <h1>未命名 - Rhinoceros (Educational) (64-bit) - [Top]</h1>
          {["M3 8h9", "M3 4h9v8H3z", "M3 4l9 9M12 4l-9 9"].map((d, i) => (
            <WindowButton key={d} aria-label={["最小化", "最大化", "关闭"][i]}>
              <svg width="16" height="16" viewBox="0 0 16 16"><path d={d} fill="none" stroke="#d6e9fa" /></svg>
            </WindowButton>
          ))}
        </TitleBar>
        <MenuBar>
          {MENUS.map(([label, key]) => (
            <MenuButton key={key}>{label}(<u>{key}</u>)</MenuButton>
          ))}
        </MenuBar>

        <CommandArea>
          <CommandLine $height={22}>
            <History>
              {PROMPT.map((t) => <Option key={t}><Mixed cjk={15} latin={13}>{t}</Mixed></Option>)}
            </History>
            <Spinner>
              <SpinButton aria-label="上"><svg width="6" height="4" viewBox="0 0 6 4"><path d="M1 3l2-2 2 2" fill="none" stroke="#444" /></svg></SpinButton>
              <SpinButton aria-label="下"><svg width="6" height="4" viewBox="0 0 6 4"><path d="M1 1l2 2 2-2" fill="none" stroke="#444" /></svg></SpinButton>
            </Spinner>
          </CommandLine>
          <CommandLine $height={18}>
            <CommandLabel htmlFor="command">指令:</CommandLabel>
            <CommandInput id="command" />
            <Spinner>
              <SpinButton $framed aria-label="上一条"><svg width="6" height="4" viewBox="0 0 6 4"><path d="M0 4l3-3 3 3z" /></svg></SpinButton>
              <SpinButton $framed aria-label="下一条"><svg width="6" height="4" viewBox="0 0 6 4"><path d="M0 0l3 3 3-3z" /></svg></SpinButton>
            </Spinner>
          </CommandLine>
        </CommandArea>

        <TabStrip>
          {TABS.map((t, i) => <ToolTab key={t} $place={tabPlace(i)}>{t}</ToolTab>)}
          <StripEnd>»<Icon name="gearSmall" size={9} /></StripEnd>
        </TabStrip>
        <ToolRow $height={26} $below={2}>
          <ToolSet $count={MAIN_TOOLS.length} $width={686}><Tools list={MAIN_TOOLS} size={18} /></ToolSet>
        </ToolRow>
        <ToolRow $height={38} $below={14}>
          <ToolSet $count={5} $width={107}><Tools list={VIEW_TOOLS} size={19} /></ToolSet>
        </ToolRow>

        <Work>
          <Palette><Tools list={PALETTE} size={18} /></Palette>

          <ViewColumn>
            <Viewport>
              <Scene>
                <defs>
                  <pattern id="minor" width="3.768" height="3.768" patternUnits="userSpaceOnUse" x="309.500" y="317">
                    <path d="M0 .5h4M.5 0v4" stroke="#8f959d" strokeWidth=".6" fill="none" />
                  </pattern>
                  <pattern id="major" width="18.840" height="18.840" patternUnits="userSpaceOnUse" x="309.500" y="317">
                    <path d="M0 .5h19M.5 0v19" stroke="#868c95" strokeWidth=".9" fill="none" />
                  </pattern>
                  <linearGradient id="fade" gradientUnits="userSpaceOnUse" x1="327" y1="161" x2="200" y2="228"><stop offset="0" stopColor="#e8554f" stopOpacity=".55" /><stop offset=".3" stopColor="#f0403a" /></linearGradient>
                </defs>
                <rect x="46" y="53" width="527" height="460" fill="url(#minor)" />
                <rect x="46" y="53" width="527" height="460" fill="url(#major)" />
                <rect x="309" y="54" width="1" height="262" fill="#0fa01c" />
                <rect x="309" y="316" width="264" height="1" fill="#b0403f" />
                <path d="M76 231.500h104q15 1 15 15V337" fill="none" stroke="#50545c" />
                <path d="M195 337.500h179.500V236.500H479" fill="none" stroke="#3f434b" />
                <path d="M326 161l1 1L212 226l0 2-12 0 6-9 3 3z" fill="url(#fade)" />
                <path d="M21.500 470v16.500H40" fill="none" stroke="#6d737b" />
                <text x="22" y="471" fontSize="9" fontFamily="Liberation Sans, sans-serif" fill="#4c5158">y</text>
                <text x="40" y="489" fontSize="9" fontFamily="Liberation Sans, sans-serif" fill="#4c5158">x</text>
              </Scene>
              <ViewTitle><span>Top</span></ViewTitle>
              <Floating>
                <FloatTitle>
                  <FloatTab><Icon name="c12" size={18} />曲线工具</FloatTab>
                  <FloatButton aria-label="设置"><Icon name="gearWhite" size={8} /></FloatButton>
                  <FloatButton aria-label="关闭"><Icon name="closeWhite" size={10} /></FloatButton>
                </FloatTitle>
                <FloatGrid><Tools list={CURVES} size={19} height={22} /></FloatGrid>
              </Floating>
            </Viewport>
            <ViewTabs>
              {["Perspective", "Top", "Front", "Right", "✦"].map((t) => (
                <ViewTab key={t} $active={t === "Top"}>{t}</ViewTab>
              ))}
            </ViewTabs>
          </ViewColumn>

          <Panel>
            <PanelTabs>
              <PanelTab $active $slant={10} $width={55}><Icon name="wheel" size={18} />属性</PanelTab>
              <PanelTab $width={54}><Icon name="monitor" size={18} />显示</PanelTab>
              <PanelTab $width={55}><Icon name="helpwin" size={18} />说明</PanelTab>
              <PanelTab $slant={20} $width={64}><Icon name="layers" size={18} />图层</PanelTab>
              <PanelGear><Icon name="gearSmall" size={9} /></PanelGear>
            </PanelTabs>
            <PanelBody>
              <Props>
                <colgroup><GutterCol /><LabelCol /><col /></colgroup>
                <tbody>
                  {GROUPS.map((g, gi) => (
                    <React.Fragment key={g.title}>
                      <tr><Group colSpan={3}>{g.title}</Group></tr>
                      {g.rows.map(([label, value, kind], ri) => (
                        <Row key={label} $dim={kind === "dim"}>
                          <td />
                          <th><RowLabel htmlFor={`f${gi}-${ri}`}><Mixed cjk={13} latin={12}>{label}</Mixed></RowLabel></th>
                          <td><Field id={`f${gi}-${ri}`} kind={kind} value={value} /></td>
                        </Row>
                      ))}
                    </React.Fragment>
                  ))}
                </tbody>
              </Props>
            </PanelBody>
          </Panel>
        </Work>

        <SnapBar>
          {SNAPS.map(([label, on, off]) => (
            <Snap key={label} $dim={off}>
              <Check type="checkbox" $size={17} defaultChecked={!!on} disabled={!!off} />
              {label}
            </Snap>
          ))}
        </SnapBar>
        <StatusBar>{STATUS_WIDTHS.map((w, i) => <StatusCell key={i} $width={w} />)}</StatusBar>
      </Window>
      <Brand>
        <svg width="36" height="40" viewBox="0 0 36 40" fill="none" stroke="#d6dce6" strokeLinecap="round" strokeLinejoin="round">
          <path d="M9 6v22c0 4 2 3 4 2M9 6c1-4 5-4 9-2l13 9c3 3 3 8 0 11L17 35c-7 4-14 3-15-4V9" strokeWidth="2.600" />
          <path d="M15 16l6 4-6 4z" fill="#d6dce6" strokeWidth="1" />
          <path d="M24 17v6" strokeWidth="1.500" />
        </svg>
        <div><strong>溜溜自学</strong><small>zixue.3D66.com</small></div>
      </Brand>
    </Desktop>
  );
}
